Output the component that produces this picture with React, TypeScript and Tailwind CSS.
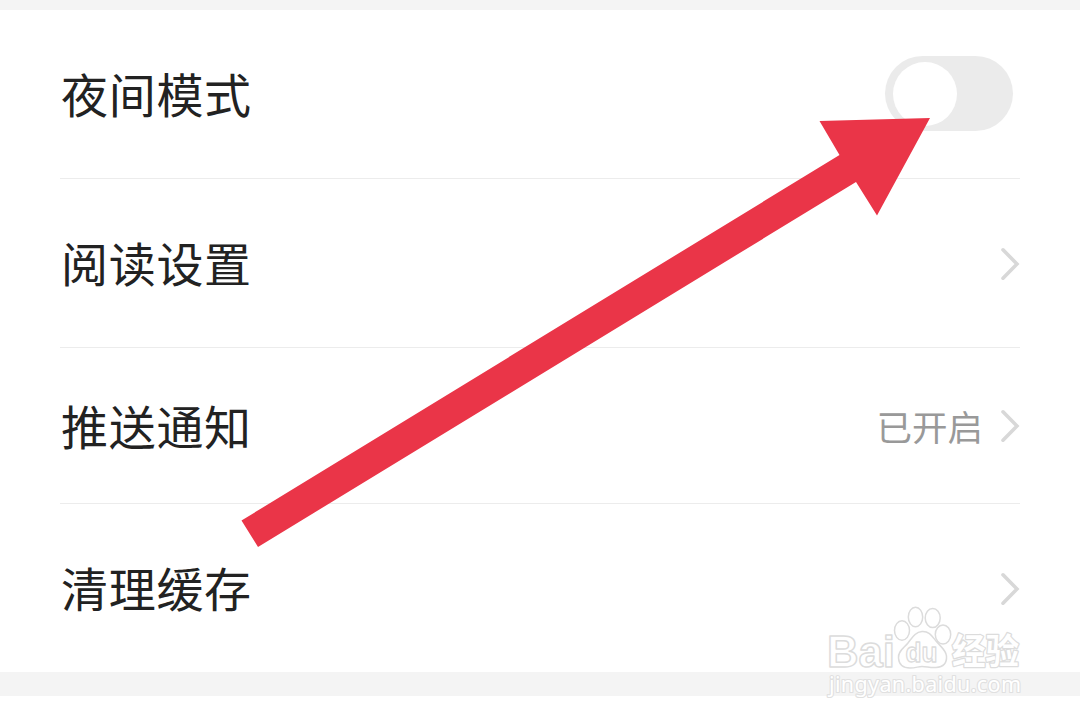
import React from "react";

function Chevron() {
  return (
    <svg className="mt-[1px] h-[36px] w-[22px] shrink-0" viewBox="0 0 22 36" fill="none" stroke="#d8d8d8" strokeWidth="3.6" strokeLinecap="round">
      <path d="M5 3.8 19 18 5 32.2" />
    </svg>
  );
}

function Label({ children }: { children: React.ReactNode }) {
  return <span className="pb-[2px] pl-[1px] text-[47px] leading-[60px] tracking-[0.7px] text-[#222]">{children}</span>;
}

function Watermark() {
  return (
    <svg className="absolute left-[820px] top-[600px] h-[105px] w-[210px]" viewBox="820 600 210 105">
      <g fill="#fff" stroke="#dcdcdc" strokeWidth="1.5" strokeLinejoin="round">
        <text x="827" y="666.5" fontSize="44.5" fontWeight="700" textLength="68" lengthAdjust="spacingAndGlyphs" className="font-['Liberation_Sans',sans-serif]">Bai</text>
        <ellipse cx="902" cy="630.5" rx="7.5" ry="9.7" />
        <ellipse cx="915.5" cy="617" rx="7.2" ry="9.7" />
        <ellipse cx="932.7" cy="618" rx="7.5" ry="9.5" />
        <ellipse cx="943" cy="634.5" rx="7.7" ry="9.5" />
        <path d="M922 631.5C915 632 912 638 908 643C904 648 898 651 898.5 658C899 665 904 668 910 668C916 668 918 666.5 922 666.5C927 666.5 930 668 936 667.5C943 667 947 663 946.5 656C946 650 940 646 936 641C932 636 929 631 922 631.5Z" />
        <text x="905.5" y="662" fontSize="27" fontWeight="700" textLength="32" lengthAdjust="spacingAndGlyphs" strokeWidth="1.3" className="font-['Liberation_Sans',sans-serif]">du</text>
        <text x="952" y="663.5" fontSize="35" fontWeight="700" textLength="67" lengthAdjust="spacingAndGlyphs" strokeWidth="2.6" paintOrder="stroke" className="font-['Noto_Sans_CJK_SC',sans-serif]">经验</text>
        <text x="829" y="692" fontSize="21.5" textLength="192" strokeWidth="2.2" paintOrder="stroke" stroke="#e0e0e0" className="font-['Noto_Sans',sans-serif]">jingyan.baidu.com</text>
      </g>
    </svg>
  );
}

export default function App() {
  return (
    <main className="relative h-[722px] w-[1080px] overflow-hidden bg-white font-['Noto_Sans_CJK_SC',sans-serif] antialiased">
      <div className="h-[10px] bg-[#f4f4f4]" />
      <section className="px-[60px]">
        <div className="flex h-[169px] items-center justify-between border-b border-[#ececec]">
          <Label>夜间模式</Label>
          <div className="mr-[7px] mb-[2px] h-[75px] w-[128px] rounded-full bg-[#ebebeb] pt-[6px] pl-[8px]">
            <div className="size-[64px] rounded-full bg-white" />
          </div>
        </div>
        <div className="flex h-[169px] items-center justify-between border-b border-[#ececec]">
          <Label>阅读设置</Label>
          <Chevron />
        </div>
        <div className="flex h-[156px] items-center justify-between border-b border-[#ececec]">
          <Label>推送通知</Label>
          <div className="flex items-center gap-[15px]">
            <span className="text-[35.5px] leading-[48px] text-[#999]">已开启</span>
            <Chevron />
          </div>
        </div>
        <div className="flex h-[168px] items-center justify-between">
          <Label>清理缓存</Label>
          <Chevron />
        </div>
      </section>
      <div className="h-[24px] bg-[#f4f4f4]" />
      <Watermark />
      <svg className="absolute inset-0 h-full w-full" viewBox="0 0 1080 722">
        <path fill="#ea3548" d="M241.5 520.5 839.5 155 819.5 121 930 118 877 215.5 856 182 258 547Z" />
      </svg>
    </main>
  );
}
